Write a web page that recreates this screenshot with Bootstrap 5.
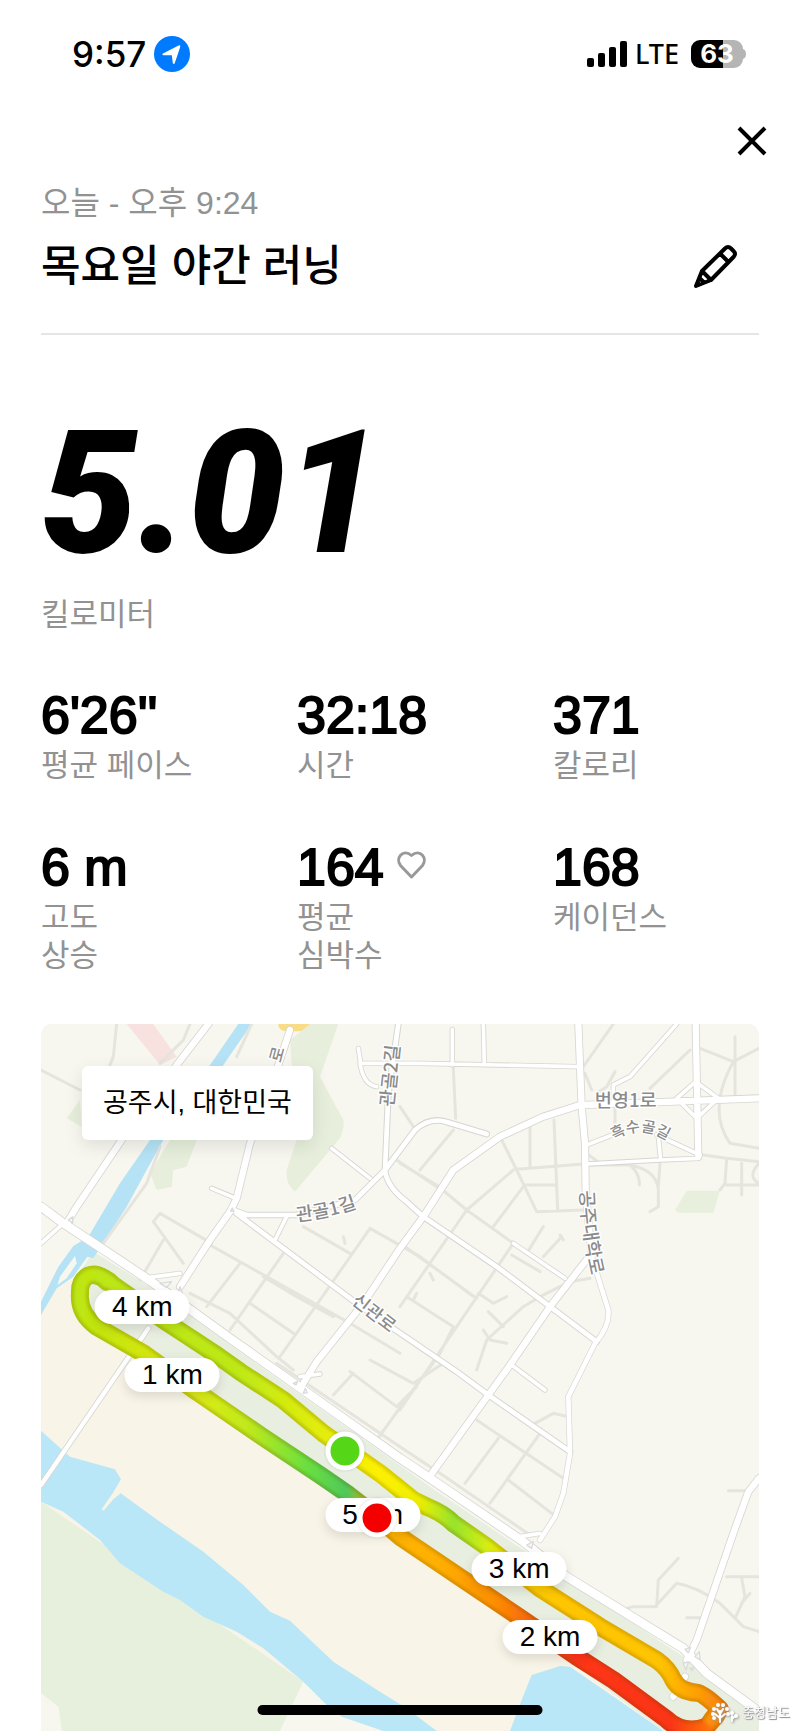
<!DOCTYPE html>
<html lang="ko">
<head>
<meta charset="utf-8">
<meta name="viewport" content="width=device-width, initial-scale=1">
<title>목요일 야간 러닝</title>
<link href="https://cdn.jsdelivr.net/npm/bootstrap@5.3.0/dist/css/bootstrap.min.css" rel="stylesheet">
<style>
  body { font-family: "Liberation Sans", "Noto Sans CJK KR", sans-serif; background: #fff; color: #000; overflow-x: hidden; }
  .status-bar { height: 108px; padding: 0 54px 0 72px; font-family: Inter, sans-serif; }
  .clock { font-size: 35px; line-height: 40px; font-weight: 500; }
  .carrier { font-family: "Noto Sans", sans-serif; font-size: 27px; line-height: 32px; font-weight: 500; }
  .battery { width: 52px; height: 28px; border-radius: 9px; background: linear-gradient(90deg, #000 62%, #b5b5b5 62%); color: #fff; font-size: 26px; line-height: 28px; font-weight: 700; }
  .close-row { height: 66px; padding-right: 24px; }
  .icon-btn { width: 48px; height: 48px; padding: 0; border: 0; line-height: 0; }
  .edit-btn { margin: 0 20px 4px 8px; }
  .page-pad { padding-left: 41px; padding-right: 41px; }
  .muted { color: #929292; font-size: 31px; line-height: 38px; }
  .run-date { font-size: 32px; }
  .run-head { padding: 10px 0 39px; border-bottom: 2px solid #e5e5e5; }
  .run-title { font-size: 43px; line-height: 56px; font-weight: 500; margin: 16px 0 0; }
  .distance { font-family: Roboto, sans-serif; font-weight: 900; font-style: italic; font-size: 172px; line-height: 140px; margin-top: 88px; }
  .distance-unit { margin-top: 33px; }
  .stats { padding-top: 55px; padding-bottom: 49px; }
  .stats-grid { --bs-gutter-x: 50px; row-gap: 56px; }
  .stat-num { font-size: 52px; line-height: 52px; margin-bottom: 6px; -webkit-text-stroke: 2px #000; }
  .heart { margin: 0 0 6px 4px; }
  .route-map { aspect-ratio: 718 / 707; border-radius: 10px 10px 0 0; background: #f7f7f0; }
  .place { left: 41px; top: 42px; padding: 18px 21px; font-size: 27px; line-height: 38px; border-radius: 6px; box-shadow: 0 6px 18px rgba(0,0,0,.1); }
  .pin { transform: translate(-50%, -50%); }
  .km { width: 95px; border-radius: 17px; font-size: 28px; line-height: 34px; box-shadow: 0 4px 12px rgba(0,0,0,.12); }
  .dot { width: 39px; height: 39px; border: 5px solid #fff; box-shadow: 0 0 3px rgba(0,0,0,.15); }
  .dot-start { background: #55d617; }
  .dot-end { background: #f50000; }
  .home-bar { bottom: 16px; width: 285px; height: 10px; border-radius: 5px; background: #000; }
  .watermark { right: 10px; bottom: 7px; color: #fff; font-size: 13px; line-height: 20px; text-shadow: 1px 1px 1px #888, 0 0 1px #aaa; }
  .watermark svg { filter: drop-shadow(1px 1px 1px #999); }
  .road-label { font-family: "Noto Sans CJK KR", sans-serif; font-weight: 500; fill: #8b8b8b; stroke: #fff; stroke-width: 8; paint-order: stroke; stroke-linejoin: round; }
</style>
</head>
<body>
<header>
  <div class="status-bar d-flex justify-content-between align-items-center">
    <div class="d-flex align-items-center gap-2">
      <span class="clock">9:57</span>
      <svg width="36" height="36" viewBox="0 0 36 36" role="img" aria-label="위치"><circle cx="18" cy="18" r="18" fill="#007aff"/><path d="M9 17.6 24.6 9.6q2.2-1 1.6 1.4L20.8 27q-1 2-2 0l-1-7.700-8.400-.1q-2-.4-.4-1.600Z" fill="#fff"/></svg>
    </div>
    <div class="d-flex align-items-center">
      <svg width="40" height="27" viewBox="0 0 40 27" role="img" aria-label="신호"><rect x="0" y="17" width="7" height="9" rx="2"/><rect x="11" y="12" width="7" height="14" rx="2"/><rect x="22" y="6" width="7" height="20" rx="2"/><rect x="33" y="0" width="7" height="26" rx="2"/></svg>
      <span class="carrier ms-2 me-2 pe-1">LTE</span>
      <span class="battery text-center">63</span>
      <svg width="3" height="10" viewBox="0 0 3 10" aria-hidden="true"><path d="M0 0q3 1 3 5t-3 5Z" fill="#b5b5b5"/></svg>
    </div>
  </div>
  <div class="close-row d-flex justify-content-end align-items-center">
    <button type="button" class="btn icon-btn" aria-label="닫기"><svg width="30" height="30" viewBox="0 0 30 30" fill="none" stroke="#000" stroke-width="4"><path d="M2 2 28 28M28 2 2 28"/></svg></button>
  </div>
</header>

<main class="page-pad">
  <section class="run-head">
    <div class="muted run-date">오늘 - 오후 9:24</div>
    <div class="d-flex justify-content-between align-items-end">
      <h1 class="run-title">목요일 야간 러닝</h1>
      <button type="button" class="btn icon-btn edit-btn" aria-label="제목 편집"><svg width="48" height="48" viewBox="0 0 48 48" fill="none" stroke="#000" stroke-width="4" stroke-linejoin="round" stroke-linecap="round"><path d="M5 44 11 29 34 6.500Q37 3.500 40 6.500L42.500 9Q45.500 12 42.500 15L20 38ZM29 11.500 37.500 20M11 29 20 38M8.500 36 13 40.500"/></svg></button>
    </div>
  </section>

  <section>
    <div class="distance">5.01</div>
    <div class="distance-unit muted">킬로미터</div>
    <div class="stats">
      <div class="row stats-grid">
        <div class="col-4"><div class="stat-num">6'26''</div><div class="muted">평균 페이스</div></div>
        <div class="col-4"><div class="stat-num">32:18</div><div class="muted">시간</div></div>
        <div class="col-4"><div class="stat-num">371</div><div class="muted">칼로리</div></div>
        <div class="col-4"><div class="stat-num">6 m</div><div class="muted">고도<br>상승</div></div>
        <div class="col-4"><div class="stat-num d-flex align-items-center gap-2">164 <svg class="heart" width="31" height="31" viewBox="0 0 31 31" fill="none" stroke="#999" stroke-width="3" stroke-linejoin="round" aria-hidden="true"><path d="M15.500 28 4.500 16.500C-1 9.500 7-1 15.500 6.500 24-1 32 9.500 26.500 16.500Z"/></svg></div><div class="muted">평균<br>심박수</div></div>
        <div class="col-4"><div class="stat-num">168</div><div class="muted">케이던스</div></div>
      </div>
    </div>
  </section>

  <section class="route-map position-relative overflow-hidden" aria-label="러닝 경로">
    <svg class="d-block w-100 h-100" viewBox="33 42 2154 2121" preserveAspectRatio="xMidYMid slice" fill="none" stroke-linecap="round" stroke-linejoin="round">
      <defs>
        <linearGradient id="outbound" gradientUnits="userSpaceOnUse" x1="130" y1="0" x2="2080" y2="0">
          <stop offset="0" stop-color="#bce612"/><stop offset=".1" stop-color="#d0e60e"/><stop offset=".19" stop-color="#dcec12"/><stop offset=".27" stop-color="#bfe81c"/><stop offset=".36" stop-color="#6adf3f"/><stop offset=".42" stop-color="#4fc95a"/><stop offset=".47" stop-color="#ffb400"/><stop offset=".56" stop-color="#ffb000"/><stop offset=".64" stop-color="#fe9300"/><stop offset=".7" stop-color="#f96a0c"/><stop offset=".77" stop-color="#ff3614"/><stop offset=".92" stop-color="#fb3414"/><stop offset=".97" stop-color="#fc6a0c"/><stop offset="1" stop-color="#fb8a06"/>
        </linearGradient>
        <linearGradient id="inbound" gradientUnits="userSpaceOnUse" x1="130" y1="0" x2="2080" y2="0">
          <stop offset="0" stop-color="#bce612"/><stop offset=".25" stop-color="#bde813"/><stop offset=".36" stop-color="#dcec10"/><stop offset=".47" stop-color="#fdf000"/><stop offset=".53" stop-color="#f0f000"/><stop offset=".585" stop-color="#97e32b"/><stop offset=".64" stop-color="#d8ee10"/><stop offset=".68" stop-color="#ffd000"/><stop offset=".75" stop-color="#ffc600"/><stop offset=".9" stop-color="#ffc400"/><stop offset=".96" stop-color="#fe9f05"/><stop offset="1" stop-color="#f8800a"/>
        </linearGradient>
        <filter id="soft" x="-5%" y="-5%" width="110%" height="110%"><feGaussianBlur stdDeviation="4"/></filter>
        <path id="strand-out" d="M230 815Q205 785 175 797 148 812 150 850 145 910 200 950L340 1030 500 1145 700 1282 870 1395 950 1450 1040 1520 1110 1580 1310 1715 1480 1830 1640 1940 1750 2010 1910 2128Q1960 2175 2030 2150L2060 2115"/>
        <path id="strand-in" d="M200 797Q225 800 250 825L400 930 560 1035 630 1085 760 1170 880 1270 1050 1390 1150 1470 1190 1490Q1240 1510 1270 1540L1370 1610 1530 1735 1710 1850 1880 1950Q1915 1975 1930 2010 1950 2045 2000 2048 2020 2050 2070 2098L2045 2130"/>
        <path id="label-gwangol" d="M800 634Q900 625 985 592"/>
        <path id="label-heuksu" d="M1752 390C1800 360 1860 350 1925 402"/>
        <path id="label-gongju" d="M1650 542Q1655 700 1700 860"/>
        <g id="streets-a" stroke-width="16">
          <path d="M33 700 100 640M545 535 610 562M770 620 735 690M905 415 1020 505M985 115 992 160 1170 160 1640 170M990 160Q1000 225 1040 230M1267 58V165M1360 42 1363 162M1940 42 1800 200 1750 225V275M2005 445 1890 450 1670 462M2010 435 1880 375M1760 370 1670 405M1885 380 1892 450M1450 700 1605 805M1445 1065 1545 1140M1997 215 1940 265 2000 325 2065 265ZM360 802 450 790M385 830 450 900 470 900M810 1100 870 1092M1470 1580 1530 1570"/>
          <path d="M33 1425 290 1050 355 955" stroke-width="18"/>
        </g>
        <g id="streets-b" stroke-width="24">
          <path d="M535 42 440 165 275 390 140 590 110 640M780 60 700 300 660 400 620 565 600 605 540 690 450 830"/>
          <path d="M610 600 650 615 800 615 975 570 1065 480 1155 360Q1200 320 1250 336L1370 372M620 610 740 700 900 820 1000 895 1170 1010 1280 1085 1375 1155 1620 1325M1105 42 1075 250 1065 480Q1070 530 1130 575L1180 620 1400 770 1560 890 1700 995" stroke-width="20"/>
          <path d="M1645 42 1655 290 1665 400 1667 540 1685 740"/><path d="M1685 740 1735 900Q1740 950 1695 1000L1655 1080 1615 1160 1620 1330 1600 1450 1575 1520 1530 1590" stroke-width="18"/>
          <path d="M1650 285 1540 320 1410 380 1270 480 1180 620 1110 715 1000 880 860 1055 820 1120M1660 285 2187 265M1997 42 2005 440M1685 730 1560 890 1440 1065 1375 1155 1195 1405M2187 1405 2155 1445 2110 1570 2000 1890 1970 1950M1965 2000 1930 2060"/>
          <path d="M33 590 100 640 230 725 360 812 600 985 820 1140 1110 1345 1200 1405 1480 1595 1610 1700 1960 1915 2030 1990 2187 2105" stroke-width="30"/>
        </g>
      </defs>

      <g>
        <path d="M290 42H370L440 140 390 165Z" fill="#f8e2e0"/>
        <path d="M745 42H860Q860 64 835 64H770Q745 64 745 42Z" fill="#f8dc86"/>
        <path d="M780 90 840 42H925L870 200 940 330Q945 350 930 385L795 545Q765 520 770 480L800 390ZM150 270 110 325 155 350ZM420 390H500L470 470 430 480 425 530 380 540 360 490Z" fill="#e7efdc"/>
        <path d="M1935 600 1970 542H2070L2050 608H1945Z" fill="#e8f0dd"/>
        <path d="M33 905 80 830 140 800 150 900 340 1050 870 1415 1480 1850 1910 2163H33Z" fill="#f8f4e7"/>
        <path d="M190 725 360 830 600 1005 820 1160 1200 1430 1480 1620 1960 1940 2187 2120V2163H1900L1480 1850 870 1415 500 1160 150 900 140 800Z" fill="#e8eee0"/>
        <path d="M33 1475 820 2015 750 2163H95L85 2090 33 2050Z" fill="#e7efdd"/>
        <path d="M33 2050 85 2090 95 2163H33ZM820 2015 890 2085 935 2120 1060 2163H750Z" fill="#f7f7f0"/>
        <path d="M33 1262 120 1340 255 1378 273 1408 248 1450 215 1498 221 1502 250 1468 272 1450 390 1535 520 1625 640 1725 720 1805 780 1832 910 1955 1050 2045 1130 2095 1220 2163H1060L935 2120 890 2085 820 2015 700 1915 620 1865 520 1820 450 1770 400 1745 270 1660 210 1590 100 1505 33 1475ZM1440 2163 1475 2070 1505 1995 1590 1968 1620 1970 1900 2163Z" fill="#bae7f7"/>
        <path d="M625 42H665L580 165 400 390 350 480 290 590 190 745 172 740 130 800 80 835 33 915V875L85 770 130 708 175 680 270 520 360 390 540 165Z" fill="#b5e3f5"/>
        <path d="M135 738 90 800 82 825 110 805 140 760Z" fill="#f7f7ef"/>
      </g>

      <g stroke="#e5e5de" stroke-width="9">
        <path d="M33 180 150 240M260 42 250 140 240 165M480 42 460 90 390 160M665 42 620 140M390 410 350 520 220 700M545 700 390 610 370 635 460 760M400 690 330 810M540 705 960 940 1110 1030M630 760 530 890M480 850 600 910 740 1040 790 1080M760 730 600 960M700 800 800 860 910 920M660 880 790 970M820 650 960 730M940 680 945 700M1020 655 870 870 750 1040M1020 655 1170 740 1330 860M1100 450 1220 530M1110 290 1150 350M1110 460 1220 525 1310 600 1450 700M1170 480 1270 360M1270 175 1277 325M1410 380 1460 480 1520 605 1660 600M1500 350V470M1572 330 1583 600M1460 478 1660 462M1480 525H1575M1450 480 1310 600 1110 890M1480 530 1390 650M1540 650 1490 730M1595 680 1540 740M1590 675 1600 690M1445 735 1530 785M1450 700 1110 1200M1125 710 1340 865M1200 790 1210 810M1130 860 1270 950 1230 1030 1180 1100M1160 850 1150 870M1345 850 1390 880 1430 860M1680 805 1620 815 1530 860 1480 890 1370 990 1340 1080M1375 905 1420 950M1360 960 1380 990 1430 1000"/>
        <path d="M1660 170 1750 42M1665 190 1685 240M1755 185 1730 230 1700 250M1980 120 1860 235M1755 290V350M2010 115 2110 155 2187 115M2115 80V260M2110 155Q2030 300 2100 400L2187 415M2020 435 2090 445 2187 455M2090 445 2085 520 2070 540M2135 460V555M2090 525H2187M2187 460Q2150 500 2187 520M1670 430 1710 460M1670 465H1800Q1830 490 1828 525M1800 465Q1880 480 1885 540V590L1860 605M1890 460 1885 530"/>
        <path d="M740 1060 1110 1310 1230 1390 1500 1575M970 1090 910 1155M1020 1050 1150 1120 1240 1060M960 1085 1100 1190 1160 1130M1170 1110 1040 1290M1340 1230 1600 1405M1405 1285 1305 1420M1530 1270 1380 1480M1435 1410 1565 1510M1515 1240 1570 1210 1615 1220M1790 1795 1810 1790H1875L1940 1720Q2000 1730 2070 1780L2140 1850 2187 1865M1880 1790 1885 1710 1945 1645M2090 1700H2187M2135 1705 2145 1760 2115 1825M2160 1750 2135 1780M2095 1442H2145M1970 1823H2010"/>
      </g>

      <g stroke="#d6d6d2"><use href="#streets-a"/><use href="#streets-b"/></g>
      <g stroke="#fff">
        <path d="M33 700 100 640M545 535 610 562M770 620 735 690M905 415 1020 505M985 115 992 160 1170 160 1640 170M990 160Q1000 225 1040 230M1267 58V165M1360 42 1363 162M1940 42 1800 200 1750 225V275M2005 445 1890 450 1670 462M2010 435 1880 375M1760 370 1670 405M1885 380 1892 450M1450 700 1605 805M1445 1065 1545 1140M1997 215 1940 265 2000 325 2065 265ZM360 802 450 790M385 830 450 900 470 900M810 1100 870 1092M1470 1580 1530 1570" stroke-width="11"/>
        <path d="M33 1425 290 1050 355 955" stroke-width="13"/>
        <path d="M535 42 440 165 275 390 140 590 110 640M780 60 700 300 660 400 620 565 600 605 540 690 450 830M1645 42 1655 290 1665 400 1667 540 1685 740M1650 285 1540 320 1410 380 1270 480 1180 620 1110 715 1000 880 860 1055 820 1120M1660 285 2187 265M1997 42 2005 440M1685 730 1560 890 1440 1065 1375 1155 1195 1405M2187 1405 2155 1445 2110 1570 2000 1890 1970 1950M1965 2000 1930 2060" stroke-width="19"/>
        <path d="M610 600 650 615 800 615 975 570 1065 480 1155 360Q1200 320 1250 336L1370 372M620 610 740 700 900 820 1000 895 1170 1010 1280 1085 1375 1155 1620 1325M1105 42 1075 250 1065 480Q1070 530 1130 575L1180 620 1400 770 1560 890 1700 995M1685 740 1735 900Q1740 950 1695 1000L1655 1080 1615 1160 1620 1330 1600 1450 1575 1520 1530 1590" stroke-width="14"/>
        <path d="M33 590 100 640 230 725 360 812 600 985 820 1140 1110 1345 1200 1405 1480 1595 1610 1700 1960 1915 2030 1990 2187 2105" stroke-width="25"/>
      </g>
      <g fill="#f7f7f5" stroke="#dadadd" stroke-width="4">
        <path d="M115 630 128 620V640ZM390 820 425 815 410 832ZM445 850 450 830 460 858ZM602 604 607 594 612 604ZM790 1120 802 1115 798 1125ZM820 1150 826 1135 832 1148ZM1490 1605 1510 1595 1505 1615ZM1965 1918 1982 1912 1975 1928ZM1995 1940 2008 1925 2010 1950ZM1960 1960 1975 1955 1968 1980ZM1980 1975 1992 1972 1986 1982Z"/>
      </g>

      <g class="road-label">
        <text font-size="50" transform="translate(752 160) rotate(-75)">로</text>
        <text font-size="56" transform="translate(1090 292) rotate(-84)">관골2길</text>
        <text font-size="56"><textPath href="#label-gwangol">관골1길</textPath></text>
        <text font-size="54" transform="translate(962 878) rotate(38)">신관로</text>
        <text font-size="56" x="1694" y="290">번영1로</text>
        <text font-size="46"><textPath href="#label-heuksu">흑수골길</textPath></text>
        <text font-size="56"><textPath href="#label-gongju">공주대학로</textPath></text>
      </g>

      <g stroke-width="54">
        <use href="#strand-out" stroke="url(#outbound)"/><use href="#strand-out" stroke="#553c00" stroke-opacity=".2"/>
        <use href="#strand-in" stroke="url(#inbound)"/><use href="#strand-in" stroke="#553c00" stroke-opacity=".2"/>
      </g>
      <g stroke-width="36" filter="url(#soft)">
        <use href="#strand-out" stroke="url(#outbound)"/><use href="#strand-in" stroke="url(#inbound)"/>
      </g>
    </svg>

    <div class="place position-absolute bg-white text-nowrap">공주시, 대한민국</div>
    <span class="pin km position-absolute bg-white text-center" style="left:14.1%;top:40%">4 km</span>
    <span class="pin km position-absolute bg-white text-center" style="left:18.3%;top:49.7%">1 km</span>
    <span class="pin km position-absolute bg-white text-center" style="left:46.2%;top:69.5%">5 km</span>
    <span class="pin km position-absolute bg-white text-center" style="left:66.6%;top:77.1%">3 km</span>
    <span class="pin km position-absolute bg-white text-center" style="left:70.9%;top:86.7%">2 km</span>
    <span class="pin dot dot-start position-absolute rounded-circle" style="left:42.4%;top:60.4%"></span>
    <span class="pin dot dot-end position-absolute rounded-circle" style="left:46.8%;top:69.9%"></span>
  </section>
</main>

<div class="watermark position-fixed d-flex align-items-center gap-1">
  <svg width="28" height="22" viewBox="0 0 28 22" fill="none" stroke="#fff" stroke-width="2" stroke-linecap="round" aria-hidden="true"><path d="M10 20V9M10 16 5 12M10 16 15 12M10 12 7 7M10 12 13 7M22 19V14M22 17 25 14"/><g fill="#fff" stroke="none"><circle cx="3" cy="12" r="2"/><circle cx="4" cy="7" r="2"/><circle cx="8" cy="3" r="2"/><circle cx="13" cy="3" r="2"/><circle cx="17" cy="7" r="2"/><circle cx="18" cy="12" r="2"/><circle cx="4" cy="16" r="2"/><circle cx="22" cy="11" r="2"/><circle cx="26" cy="14" r="2"/></g></svg>
  <span>충청남도</span>
</div>
<div class="home-bar position-fixed start-50 translate-middle-x"></div>
<script src="https://cdn.jsdelivr.net/npm/bootstrap@5.3.0/dist/js/bootstrap.bundle.min.js"></script>
</body>
</html>
